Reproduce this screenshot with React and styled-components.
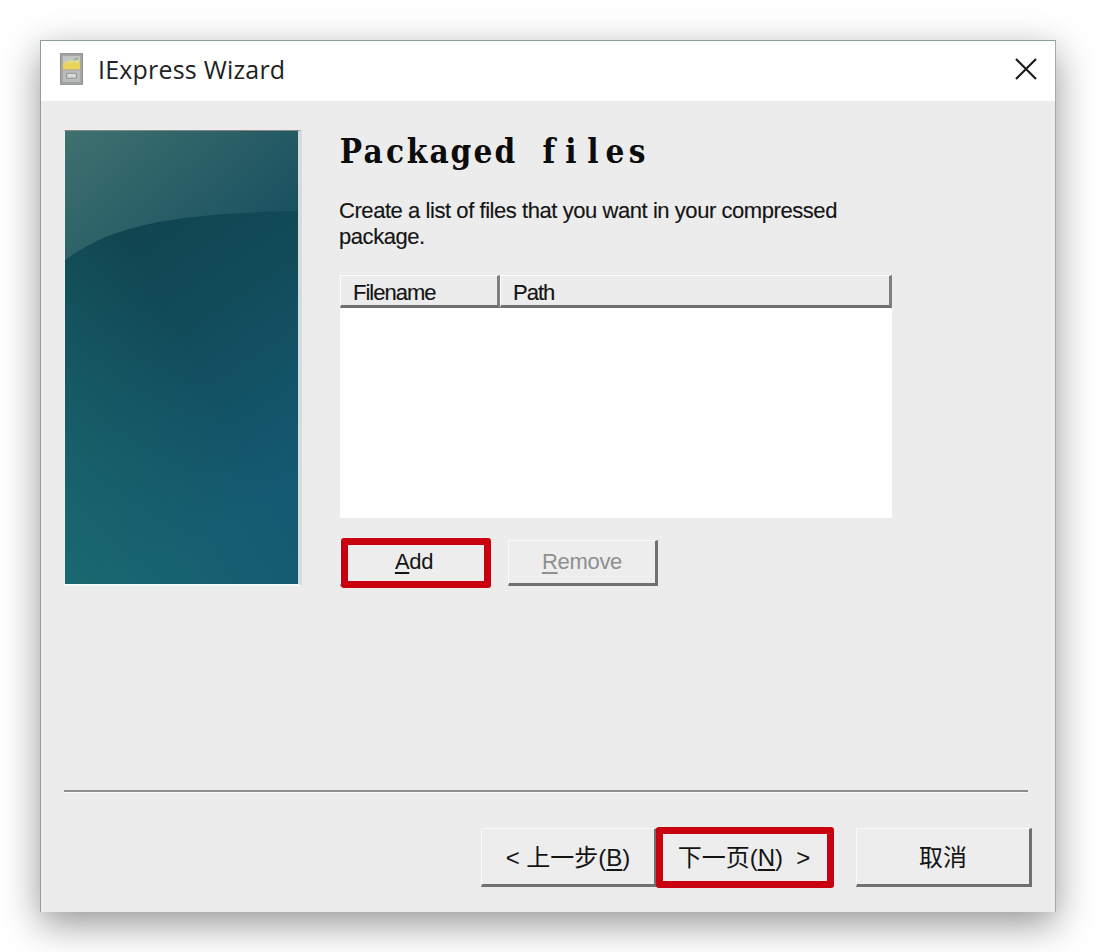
import React from 'react';
import styled, { createGlobalStyle } from 'styled-components';

const Global = createGlobalStyle`
  html, body { margin: 0; padding: 0; background: #fff; }
  body { width: 1096px; height: 952px; overflow: hidden; font-family: "Liberation Sans", "Noto Sans CJK SC", sans-serif; }
`;
const Stage = styled.div`
  padding: 40px;
  box-sizing: border-box;
  width: 1096px;
  height: 952px;
`;
const Window = styled.div`
  width: 1016px;
  height: 872px;
  box-sizing: border-box;
  display: flex;
  flex-direction: column;
  background: #ececec;
  border: 1px solid #8f9d9d;
  border-bottom: 0;
  border-right-color: #a8a8a8;
  box-shadow: 0 12px 36px rgba(0, 0, 0, 0.42);
`;
const TitleBar = styled.div`
  height: 60px;
  box-sizing: border-box;
  flex: none;
  display: flex;
  align-items: center;
  background: #fff;
  padding: 0 18px 4px 19px;
`;
const Title = styled.div`
  margin-left: 15px;
  flex: 1;
  font-family: "Open Sans", sans-serif;
  font-size: 25px;
  color: #222;
  letter-spacing: 0.2px;
`;
const Body = styled.div`
  flex: 1;
  display: flex;
  flex-direction: column;
  padding: 29px 27px 24px 23px;
  min-height: 0;
`;
const Upper = styled.div`
  height: 660px;
  flex: none;
  display: flex;
  align-items: flex-start;
`;
const Banner = styled.div`
  width: 238px;
  height: 456px;
  box-sizing: border-box;
  flex: none;
  border-top: 1px solid #868686;
  border-left: 1px solid #e8f0f0;
  border-right: 4px solid #d6dcdc;
  border-bottom: 2px solid #f4fafa;
  display: flex;
`;
const BannerArt = styled.svg`
  display: block;
  width: 233px;
  height: 453px;
`;
const Content = styled.div`
  margin-left: 38px;
  width: 552px;
  flex: none;
  display: flex;
  flex-direction: column;
`;
const Heading = styled.h1`
  margin: 0;
  height: 66px;
  display: flex;
  font-family: "DejaVu Serif", serif;
  font-stretch: condensed;
  font-weight: 700;
  font-size: 33px;
  line-height: 44px;
  color: #0c0c0c;
`;
const HeadingCell = styled.span`
  width: 22px;
  flex: none;
  display: flex;
  justify-content: center;
  white-space: pre;
`;
const Description = styled.p`
  margin: 0 0 0 -1px;
  width: 510px;
  height: 79px;
  padding-top: 2px;
  box-sizing: border-box;
  font-size: 22px;
  line-height: 26px;
  color: #141414;
  letter-spacing: -0.44px;
  -webkit-text-stroke: 0.15px #141414;
`;
const ListBox = styled.div`
  height: 243px;
  display: flex;
  flex-direction: column;
  background: #fff;
`;
const ListHeader = styled.div`
  height: 33px;
  flex: none;
  box-sizing: border-box;
  display: flex;
  background: #ececec;
`;
const HeaderCell = styled.div`
  width: ${p => p.$w};
  flex: none;
  box-sizing: border-box;
  padding-left: 12px;
  font-size: 22px;
  line-height: 33px;
  letter-spacing: -1px;
  color: #141414;
  -webkit-text-stroke: 0.15px #141414;
  background: #ececec;
  border-top: 1px solid #fff;
  border-left: 1px solid #fff;
  border-right: 3px solid #7f7f7f;
  border-bottom: 3px solid #6f6f6f;
`;
const SmallRow = styled.div`
  display: flex;
  gap: 18px;
  margin-top: 22px;
`;
const Button = styled.div`
  position: relative;
  box-sizing: border-box;
  width: ${p => p.$w};
  height: ${p => p.$h};
  flex: none;
  display: flex;
  align-items: center;
  justify-content: center;
  padding-bottom: ${p => p.$pb || '0'};
  font-size: ${p => p.$size || '22px'};
  letter-spacing: ${p => p.$ls || '-0.3px'};
  white-space: pre;
  background: #ededed;
  color: ${p => (p.$disabled ? '#8f8f8f' : '#141414')};
  border-top: 1px solid #fafafa;
  border-left: 1px solid #fafafa;
  border-right: 3px solid #707070;
  border-bottom: 3px solid #707070;
`;
const Highlight = styled.span`
  position: absolute;
  inset: ${p => p.$inset};
  border: 7px solid #c9000f;
  border-radius: 3px;
  pointer-events: none;
`;
const Under = styled.span`
  text-decoration: underline;
  text-underline-offset: 3px;
`;
const Divider = styled.div`
  height: 3px;
  flex: none;
  background: linear-gradient(#8e8e8e 0 2px, #fafafa 2px);
`;
const Footer = styled.div`
  flex: 1;
  display: flex;
  justify-content: flex-end;
  align-items: flex-start;
  padding-top: 35px;
  margin-right: -4px;
`;
const CancelGap = styled.div`
  width: 23px;
  flex: none;
`;

const FileIcon = () => (
  <svg width="23" height="32" viewBox="0 0 24 33" style={{ flex: 'none' }}>
    <rect x="0.5" y="0.5" width="23" height="32" fill="#a3a5a5" stroke="#8b8d8d" />
    <rect x="3" y="3" width="18" height="12" fill="#c4c6c6" />
    <rect x="3" y="10" width="18" height="7" fill="#e8d45a" />
    <path d="M4 10 L11 7 L15 9 L20 6 V10 Z" fill="#f0dd7a" />
    <rect x="15" y="5" width="4" height="2" fill="#8ab59a" />
    <rect x="3" y="18" width="18" height="12" fill="#b9bcbc" />
    <rect x="7" y="21" width="10" height="5" fill="#d9dbdb" stroke="#8f9191" strokeWidth="1" />
  </svg>
);

const CloseIcon = () => (
  <svg width="22" height="22" viewBox="0 0 22 22" style={{ flex: 'none' }}>
    <path d="M1 1 L21 21 M21 1 L1 21" stroke="#1c1c1c" strokeWidth="2.2" />
  </svg>
);

const headingText = 'Packaged files';

export default function App() {
  return (
    <Stage>
      <Global />
      <Window>
        <TitleBar>
          <FileIcon />
          <Title>IExpress Wizard</Title>
          <CloseIcon />
        </TitleBar>
        <Body>
          <Upper>
            <Banner>
              <BannerArt viewBox="0 0 233 453" preserveAspectRatio="none">
                <defs>
                  <linearGradient id="base" x1="0" y1="0" x2="0.35" y2="1">
                    <stop offset="0" stopColor="#0f3f46" />
                    <stop offset="0.5" stopColor="#114a58" />
                    <stop offset="1" stopColor="#145a72" />
                  </linearGradient>
                  <linearGradient id="glow" x1="0" y1="0" x2="1" y2="0.6">
                    <stop offset="0" stopColor="#3e716f" />
                    <stop offset="1" stopColor="#1a5160" />
                  </linearGradient>
                  <linearGradient id="corner" x1="0.5" y1="0.45" x2="0" y2="1">
                    <stop offset="0" stopColor="#1b6b70" stopOpacity="0" />
                    <stop offset="1" stopColor="#1b6b70" stopOpacity="0.85" />
                  </linearGradient>
                </defs>
                <rect width="233" height="453" fill="url(#base)" />
                <rect width="233" height="453" fill="url(#corner)" />
                <path d="M0 0 H233 V80 C90 82 40 100 0 129 Z" fill="url(#glow)" />
              </BannerArt>
            </Banner>
            <Content>
              <Heading aria-label={headingText}>
                {headingText.split('').map((ch, i) => (
                  <HeadingCell key={i}>{ch}</HeadingCell>
                ))}
              </Heading>
              <Description>Create a list of files that you want in your compressed package.</Description>
              <ListBox>
                <ListHeader>
                  <HeaderCell $w="160px">Filename</HeaderCell>
                  <HeaderCell $w="392px">Path</HeaderCell>
                </ListHeader>
              </ListBox>
              <SmallRow>
                <Button $w="150px" $h="46px">
                  <span><Under>A</Under>dd</span>
                  <Highlight $inset="-3px -4px -5px 0" />
                </Button>
                <Button $w="150px" $h="46px" $disabled>
                  <span><Under>R</Under>emove</span>
                </Button>
              </SmallRow>
            </Content>
          </Upper>
          <Divider />
          <Footer>
            <Button $w="176px" $h="59px" $size="24px" $ls="0" $pb="3px">
              <span>{'< 上一步('}<Under>B</Under>{')'}</span>
            </Button>
            <Button $w="176px" $h="59px" $size="24px" $ls="0" $pb="3px">
              <span>{'下一页('}<Under>N</Under>{')  >'}</span>
              <Highlight $inset="-2px -4px -4px -2px" />
            </Button>
            <CancelGap />
            <Button $w="176px" $h="59px" $size="24px" $ls="0" $pb="3px">取消</Button>
          </Footer>
        </Body>
      </Window>
    </Stage>
  );
}
